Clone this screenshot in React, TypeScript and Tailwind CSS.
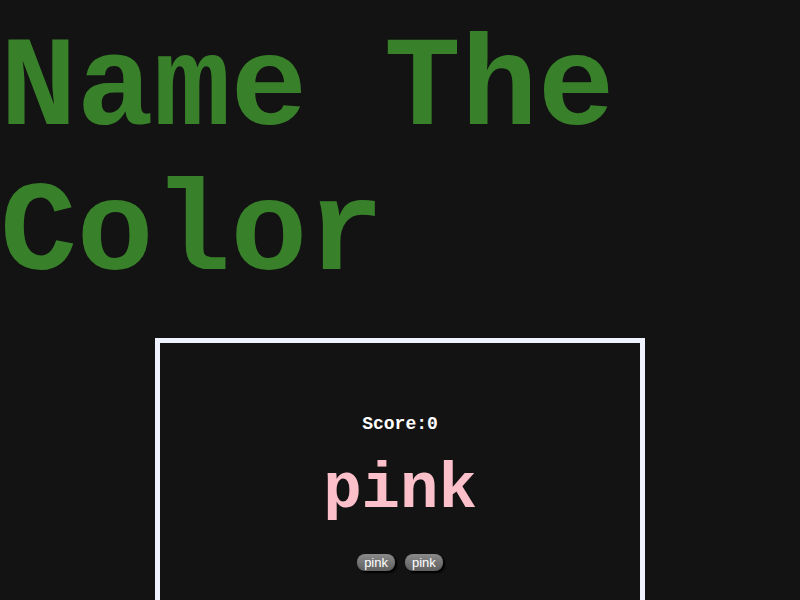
import React from "react";

const options = ["pink", "pink"];

const App = () => {
  return (
    <div className="h-[600px] w-full overflow-hidden bg-[#131313] font-['Courier_New','Nimbus_Mono_PS','Liberation_Mono',monospace]">
      <h1 className="mt-[17px] text-[128px] font-bold leading-[145px] text-[#38812a]">
        Name The Color
      </h1>
      <div className="mx-auto mt-[31px] flex h-[300px] w-[490px] flex-col items-center border-[5px] border-[#eff3ff] pt-[68px]">
        <p className="text-[18px] font-bold text-white">Score:0</p>
        <p className="mt-[14px] text-[64px] font-bold leading-[76px] text-[#fcc0cb]">
          pink
        </p>
        <div className="mt-[26px] flex gap-[10px]">
          {options.map((name, i) => (
            <button
              key={i}
              className="rounded-[8px] bg-gradient-to-b from-[#8a8a8a] to-[#606060] px-[7px] py-[1px] font-['Liberation_Sans',sans-serif] text-[13px] leading-[15px] text-white shadow-[2px_2px_2px_#000]"
            >
              {name}
            </button>
          ))}
        </div>
      </div>
    </div>
  );
};

export default App;
